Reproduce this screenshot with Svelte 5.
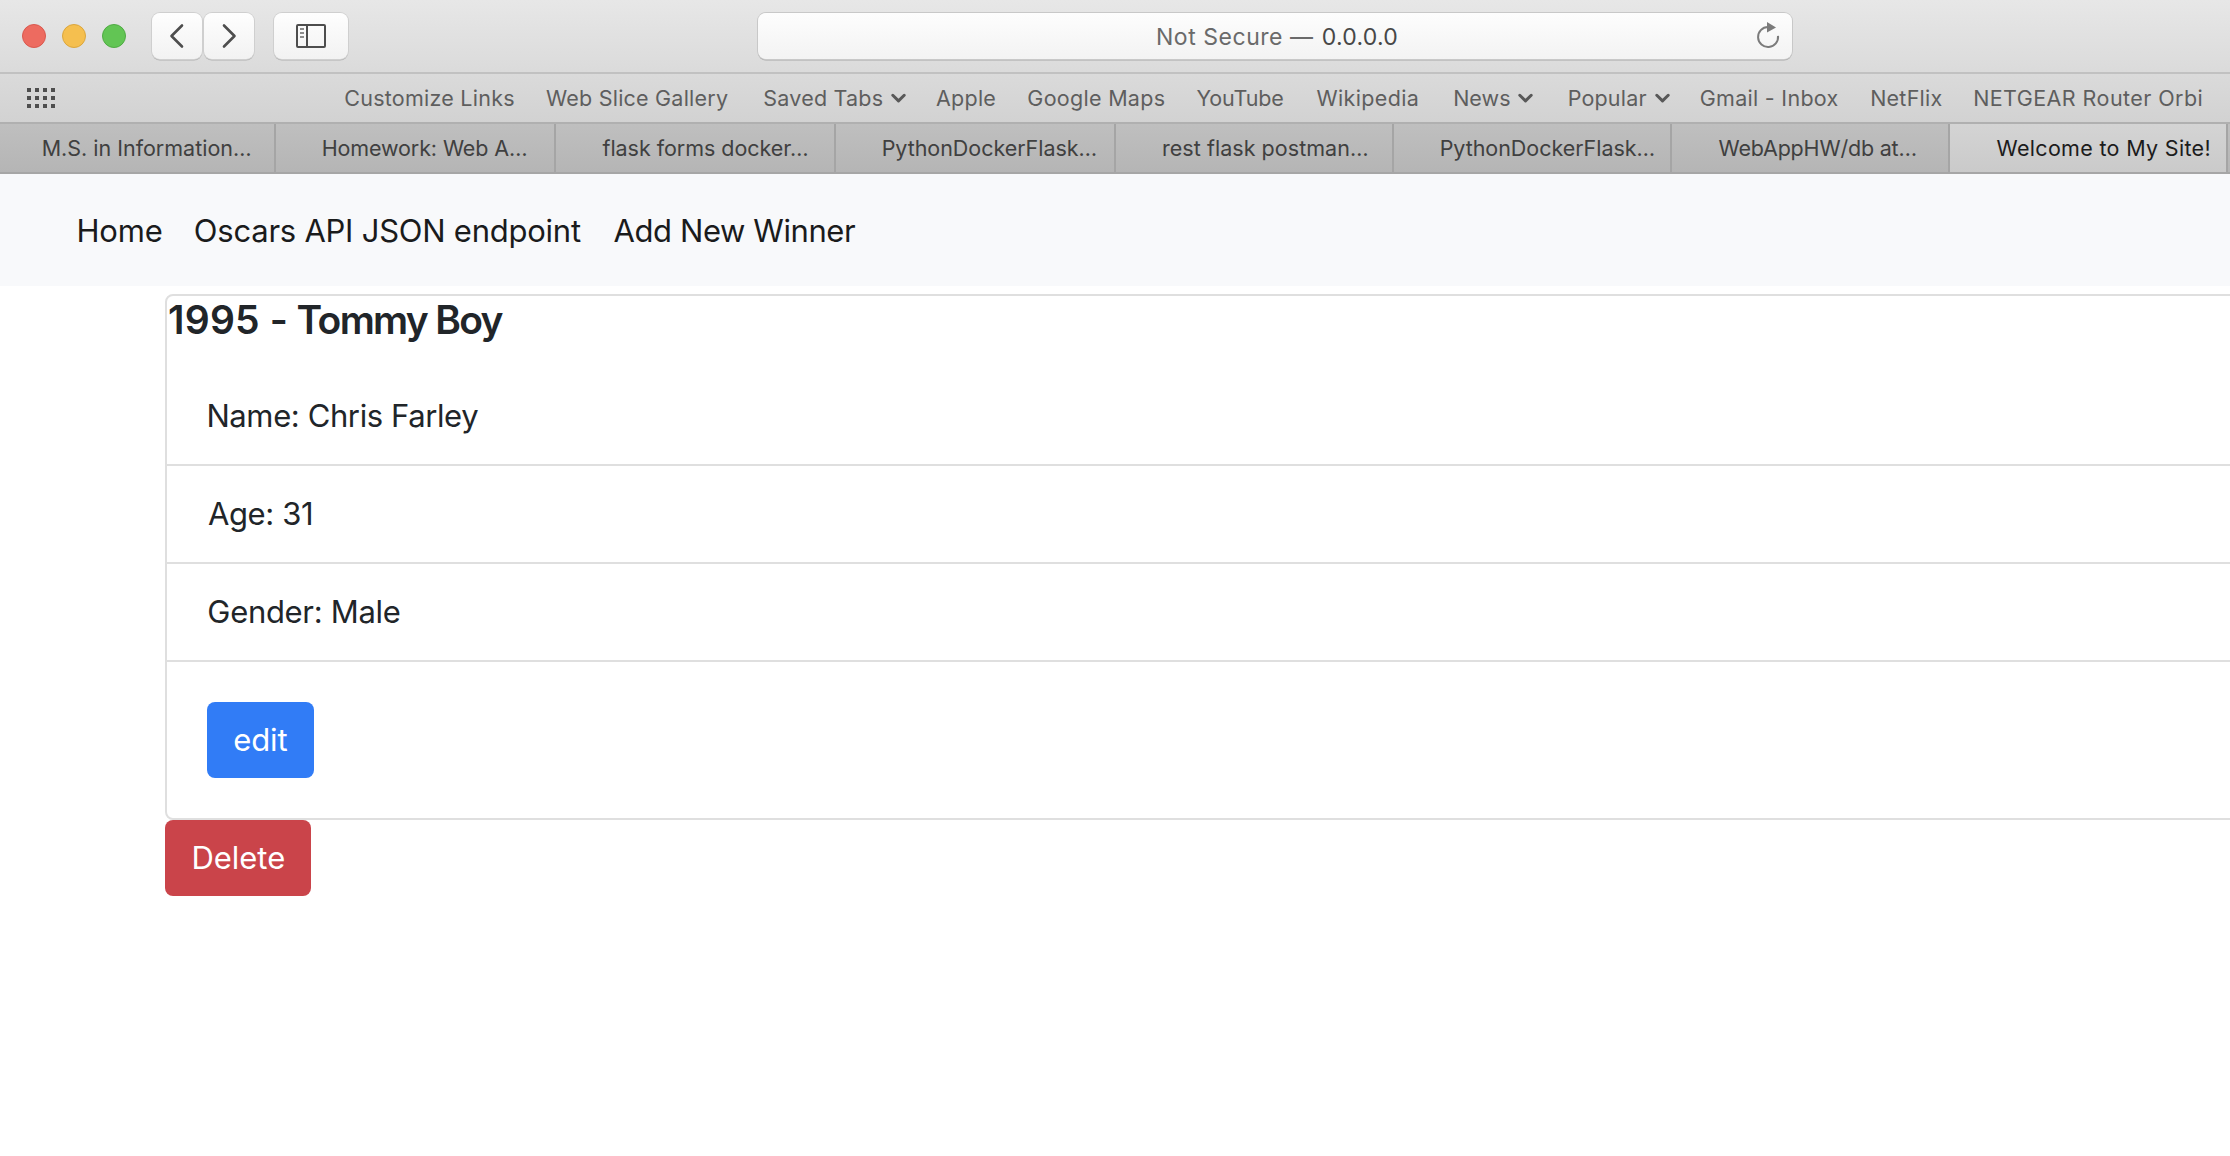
<script>
  const bookmarks = [
    { label: 'Customize Links', w: 169.5, gap: 0 },
    { label: 'Web Slice Gallery', w: 182, gap: 32 },
    { label: 'Saved Tabs', w: 119, gap: 35.5, menu: true },
    { label: 'Apple', w: 59.5, gap: 30.5 },
    { label: 'Google Maps', w: 137, gap: 32 },
    { label: 'YouTube', w: 87, gap: 32 },
    { label: 'Wikipedia', w: 101, gap: 33 },
    { label: 'News', w: 56, gap: 36.5, menu: true },
    { label: 'Popular', w: 78, gap: 35.5, menu: true },
    { label: 'Gmail - Inbox', w: 138, gap: 30.5 },
    { label: 'NetFlix', w: 71, gap: 33 },
    { label: 'NETGEAR Router Orbi', w: 228, gap: 32 },
  ];

  const tabs = [
    { label: 'M.S. in Information…', w: 208, size: 276 },
    { label: 'Homework: Web A…', w: 204, size: 280 },
    { label: 'flask forms docker…', w: 205, size: 280 },
    { label: 'PythonDockerFlask…', w: 213.5, size: 280 },
    { label: 'rest flask postman…', w: 205, size: 278 },
    { label: 'PythonDockerFlask…', w: 213.5, size: 278 },
    { label: 'WebAppHW/db at…', w: 197.5, size: 278 },
    { label: 'Welcome to My Site!', w: 213, size: 278, active: true },
  ];

  const links = [
    { label: 'Home', w: 84 },
    { label: 'Oscars API JSON endpoint', w: 386.5 },
    { label: 'Add New Winner', w: 242 },
  ];

  const details = [
    { label: 'Name: Chris Farley', w: 270.5 },
    { label: 'Age: 31', w: 103.5 },
    { label: 'Gender: Male', w: 192 },
  ];

  const ctx = document.createElement('canvas').getContext('2d');

  // Tracks the label so its visible glyphs span exactly `width` pixels.
  // The ink box comes back in whole pixels, so the edge bearings are
  // measured at a larger size and scaled down.
  function track(node, width) {
    const cs = getComputedStyle(node);
    const text = node.textContent;
    const size = parseFloat(cs.fontSize);
    const k = 20;
    ctx.font = `${cs.fontWeight} ${size}px ${cs.fontFamily}`;
    const advance = ctx.measureText(text).width;
    ctx.font = `${cs.fontWeight} ${size * k}px ${cs.fontFamily}`;
    const first = ctx.measureText(text[0]);
    const last = ctx.measureText(text[text.length - 1]);
    const left = Math.max(-first.actualBoundingBoxLeft / k - 0.8, 0);
    const right = Math.max((last.width - last.actualBoundingBoxRight) / k - 0.4, 0);
    node.style.width = `${width}px`;
    node.style.letterSpacing = `${(width - (advance - left - right)) / (text.length - 1)}px`;
    node.style.textIndent = `${-left}px`;
  }
</script>

<div class="window">
  <header class="toolbar">
    <div class="lights">
      <span class="light red"></span>
      <span class="light yellow"></span>
      <span class="light green"></span>
    </div>
    <div class="history">
      <button class="tool" aria-label="Back">
        <svg width="50" height="46" viewBox="0 0 50 46"><path d="M30 12.5 19.5 23 30 33.5" /></svg>
      </button>
      <button class="tool" aria-label="Forward">
        <svg width="50" height="46" viewBox="0 0 50 46"><path d="M20 12.5 30.5 23 20 33.5" /></svg>
      </button>
    </div>
    <button class="tool wide" aria-label="Sidebar">
      <svg class="side" width="30" height="24" viewBox="0 0 30 24">
        <rect x="1" y="1" width="28" height="22" rx="1" />
        <path d="M11 1v22" />
        <path class="lines" d="M4 5h4M4 9h4M4 13h4" />
      </svg>
    </button>
    <div class="address">
      <span class="fit muted" use:track={156}>Not Secure —</span>
      <span class="fit host" use:track={75}>0.0.0.0</span>
      <svg class="reload" width="24" height="28" viewBox="0 0 24 28">
        <path d="M22 13.8A10 10 0 1 1 12 5" />
        <path class="tip" d="M11 0v10.6l9-5.2z" />
      </svg>
    </div>
  </header>

  <nav class="favorites">
    <svg class="grid" width="28" height="20" viewBox="0 0 28 20">
      {#each [0, 8, 16, 24] as x}
        {#each [0, 8, 16] as y}
          <rect {x} {y} width="4" height="4" />
        {/each}
      {/each}
    </svg>
    {#each bookmarks as b}
      <span class="bookmark" style:margin-left="{b.gap}px">
        <span class="fit" use:track={b.w}>{b.label}</span>
        {#if b.menu}
          <svg class="chev" width="15" height="10" viewBox="0 0 15 10"><path d="M1.8 2.3 7.5 7.9 13.2 2.3" /></svg>
        {/if}
      </span>
    {/each}
  </nav>

  <div class="tabs">
    {#each tabs as t}
      <div class="tab" class:active={t.active} style:width="{t.size}px">
        <span class="fit" use:track={t.w}>{t.label}</span>
      </div>
    {/each}
  </div>

  <nav class="site">
    {#each links as l}
      <a href="#top" class="fit" use:track={l.w}>{l.label}</a>
    {/each}
  </nav>

  <main>
    <section class="card">
      <h5>
        <span class="fit" use:track={117.5}>1995 -</span>
        <span class="fit" use:track={206.5}>Tommy Boy</span>
      </h5>
      <ul>
        {#each details as d}
          <li><span class="fit" use:track={d.w}>{d.label}</span></li>
        {/each}
        <li class="action">
          <button class="btn edit"><span class="fit" use:track={53.5}>edit</span></button>
        </li>
      </ul>
    </section>
    <button class="btn delete"><span class="fit" use:track={91.5}>Delete</span></button>
  </main>
</div>

<style>
  :global(body) {
    margin: 0;
    background: #fff;
    overflow: hidden;
  }
  .window {
    width: 2230px;
    height: 1156px;
    overflow: hidden;
    box-sizing: border-box;
    font-family: Inter, 'Liberation Sans', sans-serif;
    background: linear-gradient(#e7e7e7, #d2d2d2 122px, #fff 122px);
  }
  button {
    font: inherit;
    border: 0;
    padding: 0;
    margin: 0;
  }
  .fit {
    display: inline-block;
    white-space: nowrap;
    flex: none;
  }
  .toolbar {
    display: flex;
    height: 72px;
    padding: 13px 0 0 22px;
    box-sizing: border-box;
  }
  .lights {
    display: flex;
    gap: 16px;
    padding-top: 11px;
    width: 130px;
  }
  .light {
    width: 24px;
    height: 24px;
    border-radius: 50%;
    box-sizing: border-box;
    border: 1px solid;
  }
  .red {
    background: #ed6b60;
    border-color: #d9584e;
  }
  .yellow {
    background: #f5bf4f;
    border-color: #dba63d;
  }
  .green {
    background: #62c554;
    border-color: #4fab43;
  }
  .history {
    display: flex;
    gap: 2px;
  }
  .tool {
    width: 50px;
    height: 46px;
    border-radius: 8px;
    background: linear-gradient(#fefefe, #f2f2f2);
    box-shadow: 0 0 0 1px #cfcfcf, 0 1.5px 0 #b0b0b0;
    display: flex;
    align-items: center;
    justify-content: center;
  }
  .tool path,
  .side rect {
    fill: none;
    stroke: #4d4d4d;
    stroke-width: 2.6;
    stroke-linecap: round;
    stroke-linejoin: round;
  }
  .side rect,
  .side path {
    stroke-width: 2;
    stroke-linecap: butt;
  }
  .side .lines {
    stroke: #8c8c8c;
  }
  .tool.wide {
    width: 74px;
    margin-left: 20px;
  }
  .address {
    display: flex;
    align-items: center;
    width: 1034px;
    height: 46px;
    margin-left: 410px;
    padding: 0 12px 0 399px;
    box-sizing: border-box;
    border-radius: 8px;
    font-size: 23px;
    line-height: 43px;
    background: linear-gradient(#fdfdfd, #f3f3f3);
    box-shadow: 0 0 0 1px #c8c8c8, 0 1.5px 0 #a8a8a8;
  }
  .address .fit {
    padding-top: 3px;
  }
  .muted {
    color: #6a6a6a;
  }
  .host {
    color: #474747;
    margin-left: 9px;
  }
  .reload {
    margin-left: auto;
  }
  .reload path {
    fill: none;
    stroke: #7b7b7b;
    stroke-width: 2;
  }
  .reload .tip {
    fill: #7b7b7b;
    stroke: none;
  }
  .favorites {
    display: flex;
    align-items: center;
    height: 50px;
    box-sizing: border-box;
    border-top: 2px solid #c1c1c1;
    padding-left: 27px;
    font-size: 21.5px;
    color: #5e5e5e;
  }
  .grid {
    margin-right: 289.5px;
    fill: #4e4e4e;
  }
  .bookmark {
    display: flex;
    align-items: center;
    flex: none;
  }
  .chev {
    margin-left: 8px;
  }
  .chev path {
    fill: none;
    stroke: #585858;
    stroke-width: 3;
    stroke-linecap: round;
    stroke-linejoin: round;
  }
  .tabs {
    display: flex;
    height: 52px;
    box-sizing: border-box;
    border-top: 2px solid #b0b0b0;
    border-bottom: 2px solid #a6a6a6;
    background: linear-gradient(#bfbfbf, #b5b5b5);
    font-size: 21.5px;
    color: #404040;
  }
  .tab {
    display: flex;
    align-items: center;
    flex: none;
    box-sizing: border-box;
    padding-left: 46.5px;
    border-right: 2px solid #a5a5a5;
  }
  .tab:first-child {
    padding-left: 42.5px;
  }
  .tab.active {
    background: linear-gradient(#d4d4d4, #cacaca);
    color: #1c1c1c;
  }
  .site {
    display: flex;
    align-items: center;
    gap: 32.5px;
    height: 112px;
    padding-left: 78px;
    background: #f8f9fb;
    font-size: 31px;
  }
  .site a {
    color: #1a1b1c;
    text-decoration: none;
  }
  main {
    padding: 8px 0 0 165px;
    color: #212529;
    font-size: 31px;
    line-height: 48px;
  }
  .card {
    width: 2200px;
    height: 526px;
    box-sizing: border-box;
    border: 2px solid #dfdfdf;
    border-radius: 8px;
  }
  h5 {
    display: flex;
    gap: 11px;
    margin: 0 0 24px;
    padding-left: 1.5px;
    font-size: 39px;
    line-height: 48px;
    font-weight: 600;
  }
  ul {
    list-style: none;
    margin: 0;
    padding: 0;
  }
  li {
    height: 98px;
    padding: 24px 41px;
    box-sizing: border-box;
    border-bottom: 2px solid #dfdfdf;
  }
  li.action {
    padding: 40px;
    height: 156px;
    border: 0;
  }
  .btn {
    display: block;
    height: 76px;
    border-radius: 8px;
    color: #fff;
    text-align: left;
  }
  .edit {
    width: 107px;
    padding-left: 27px;
    background: #317cf6;
  }
  .delete {
    width: 146px;
    padding-left: 28px;
    background: #ca444a;
  }
</style>
